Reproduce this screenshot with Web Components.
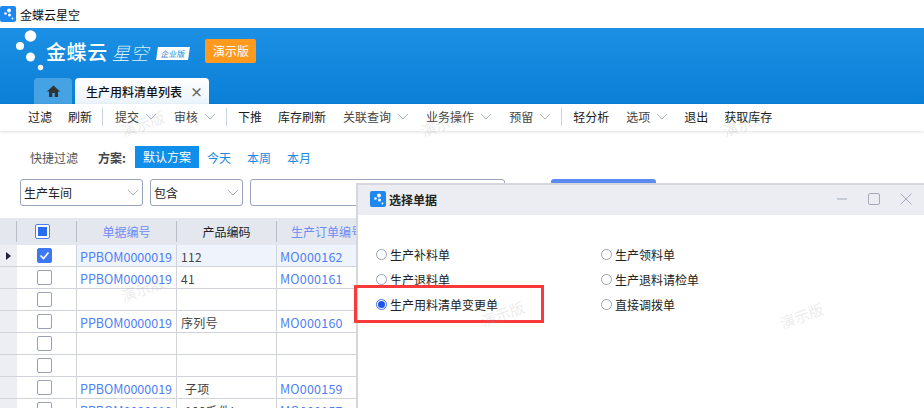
<!DOCTYPE html>
<html><head><meta charset="utf-8">
<style>
html,body{margin:0;padding:0}
body{width:924px;height:408px;overflow:hidden;font:12px "Noto Sans CJK SC","Noto Sans",sans-serif;color:#333;background:#fff}
</style></head><body>
<kd-app></kd-app>
<script>
const logo=(s)=>`<svg width="${s}" height="${s}" viewBox="0 0 16 16" style="display:block;flex:none"><rect width="16" height="16" rx="2" fill="#1e88ee"/><circle cx="9" cy="4.5" r="1.9" fill="#fff"/><circle cx="5.5" cy="7.5" r="1.3" fill="#fff"/><circle cx="9.5" cy="9" r="1.5" fill="#fff"/><circle cx="12.5" cy="12.5" r=".9" fill="#fff"/></svg>`;
const chev=`<svg width="12" height="7" viewBox="0 0 12 7" style="display:block"><path d="M1 1l5 5 5-5" fill="none" stroke="#a9b4c6" stroke-width="1"/></svg>`;
class KdBase extends HTMLElement{
  connectedCallback(){ if(!this.shadowRoot){this.attachShadow({mode:'open'}).innerHTML=this.render();} }
}
class KdTitlebar extends KdBase{render(){return `<style>:host{display:flex;align-items:center;height:28px;gap:4px;color:#111;font-size:12px;background:#fff}</style>${logo(16)}<span><slot></slot></span>`}}
class KdHeader extends KdBase{render(){return `<style>
:host{display:block;height:76px;background:linear-gradient(180deg,#1b90e4,#0a7fd6);position:relative}
.brand{display:flex;align-items:center;height:47px;padding-left:16px}
.dots{flex:none;width:30px;height:44px}
.n{color:#fff;font-size:20px;font-weight:500;letter-spacing:.6px;line-height:1}
.x{margin-left:4px;color:#d5ebfb;font-size:18px;font-weight:300;font-style:italic;letter-spacing:.8px;line-height:1}
.e{margin-left:8px;width:32px;height:13px;background:#fff;color:#1b85d8;font-size:8px;line-height:13px;text-align:center;transform:skewX(-8deg);margin-top:3px}
.demo{margin-left:16px;width:51px;height:24px;margin-top:-2px;background:#ff9a1f;border-radius:2px;color:#fff;text-align:center;line-height:24px;font-size:12px}
.tabs{display:flex;gap:3px;padding-left:34px;height:26px;margin-top:3px}
.home{width:38px;background:#45a2e3;border-radius:4px 4px 0 0;display:flex;align-items:center;justify-content:center}
.tab{width:134px;background:linear-gradient(#fff,#eaf3fb);border-radius:4px 4px 0 0;display:flex;align-items:center;padding-left:11px;box-sizing:border-box;color:#111;font-weight:500}
.c{margin-left:8px;color:#666;font-size:13px;font-weight:700;line-height:1}
</style>
<div class="brand">
<svg class="dots" viewBox="0 0 30 44"><circle cx="14.500" cy="6" r="5.800" fill="#fff"/><circle cx="4" cy="16" r="4" fill="#fff"/><circle cx="14.500" cy="27" r="4.500" fill="#fff"/><circle cx="25" cy="37.500" r="2.700" fill="#fff" transform="translate(-.5 0)"/></svg>
<span class="n">金蝶云</span><span class="x">星空</span><span class="e">企业版</span><span class="demo">演示版</span></div>
<div class="tabs"><div class="home"><svg width="13" height="12" viewBox="0 0 13 12"><path d="M6.500 .5L0 6.500h2V12h3.300V8h2.400v4H11V6.500h2z" fill="#333"/></svg></div>
<div class="tab">生产用料清单列表<span class="c">×</span></div></div>`}}
class KdTool extends KdBase{render(){const a=this.hasAttribute('menu');const m=+(this.getAttribute('gap')||16)-(a?2:0);return `<style>:host{display:flex;align-items:center;gap:6px;margin-right:${m}px;color:${a?'#444':'#1a1a1a'}}</style><slot></slot>${a?chev:''}`}}
class KdSep extends KdBase{render(){return `<style>:host{display:block;width:1px;height:18px;background:#c6d3e6;margin-right:${this.getAttribute('gap')||12}px}</style>`}}
class KdToolbar extends KdBase{render(){return `<style>:host{display:flex;align-items:center;height:27px;box-sizing:border-box;padding:0 0 2px 28px;background:#fff;box-shadow:0 1px 3px rgba(0,0,0,.12);position:relative}</style><slot></slot>`}}
class KdScheme extends KdBase{render(){return `<style>
:host{display:flex;align-items:center;height:22px;margin-top:15px;padding-left:30px}
.t{color:#555;width:68px}.l{font-weight:700;color:#444;width:37px}
.on{width:64px;height:22px;line-height:22px;background:#0f8eea;color:#fff;text-align:center;margin-right:8px}
.o{color:#1b8ae0;margin-right:16px;width:24px}
</style><span class="t">快捷过滤</span><span class="l">方案:</span><span class="on">默认方案</span><span class="o">今天</span><span class="o">本周</span><span class="o">本月</span>`}}
class KdSelect extends KdBase{render(){const w=this.getAttribute('w');return `<style>
:host{display:flex;align-items:center;justify-content:space-between;box-sizing:border-box;width:${w}px;height:27px;border:1px solid #99a3bb;border-radius:3px;padding:0 3px 0 3px;color:#222;margin-right:7px;flex:none}
</style><span><slot></slot></span>${this.hasAttribute('plain')?'':chev}`}}
class KdFilter extends KdBase{render(){return `<style>:host{display:flex;height:27px;margin-top:11px;padding-left:20px}
.b{width:105px;height:27px;background:#5a8bf0;border-radius:3px;margin-left:39px;flex:none}</style>
<kd-select w="123">生产车间</kd-select><kd-select w="93">包含</kd-select><kd-select w="255" plain></kd-select><div class="b"></div>`}}
const cols='17px 60px 100px 100px 1fr';
class KdHead extends KdBase{render(){return `<style>
:host{display:grid;grid-template-columns:${cols};height:27px;background:#e4e7ee;align-items:center}
div{height:21px;line-height:21px;text-align:center;border-right:1px solid #b9bdc6;color:#6c8ef2;box-sizing:content-box;display:flex;align-items:center;justify-content:center;white-space:nowrap;overflow:hidden}
.k{color:#222}.last{border:0}
.b{justify-content:flex-start;padding-left:18px;box-sizing:border-box;height:21px}
i{display:block;box-sizing:border-box;width:15px;height:15px;border:1px solid #4d7ff0;border-radius:2px;background:#fff;padding:2px}
i:before{content:"";display:block;width:9px;height:9px;background:#2a6cf0}
</style><div></div><div class="b"><i></i></div><div>单据编号</div><div class="k">产品编码</div><div class="last" style="justify-content:flex-start;padding-left:14px">生产订单编号</div>`}}
class KdRow extends KdBase{render(){const g=n=>this.getAttribute(n)||'';const s=this.hasAttribute('sel');return `<style>
:host{display:grid;grid-template-columns:${cols};height:22px;box-sizing:border-box;border-bottom:1px solid #d0d3da;background:${s?'#eff3fc':'#fff'}}
div{border-right:1px solid #d0d3da;display:flex;align-items:center;padding:1px 0 0 3px;box-sizing:border-box;white-space:nowrap;overflow:hidden;line-height:21px}
.a{background:#eceef3;border-right:0;padding:0;justify-content:center}
.c{background:#fff;padding:0 0 0 20px;justify-content:flex-start}
.l{color:#4f7ff5;font-size:12.5px}.last{border:0;letter-spacing:.2px}
.t{color:#444;padding-left:${g('ind')||4}px;letter-spacing:.3px}
i{display:block;box-sizing:border-box;width:15px;height:15px;border:1px solid #9aa1b1;border-radius:2px;background:#fff}
i.on{background:#3d78f2;border-color:#3d78f2}
svg{display:block}
</style><div class="a">${s?'<svg width="5" height="8" viewBox="0 0 5 8"><path d="M0 0l5 4-5 4z" fill="#223"/></svg>':''}</div><div class="c"><i class="${s?'on':''}">${s?'<svg width="13" height="13" viewBox="0 0 13 13"><path d="M2.500 6.500l3 3 5-6" fill="none" stroke="#fff" stroke-width="1.600"/></svg>':''}</i></div><div class="l">${g('a')}</div><div class="t">${g('b')}</div><div class="l last">${g('c')}</div>`}}
class KdRadio extends KdBase{render(){const on=this.hasAttribute('on');return `<style>
:host{display:flex;align-items:center;gap:3px;height:24px;color:#222}
i{display:block;box-sizing:border-box;width:11px;height:11px;border:1px solid #9aa3b5;border-radius:50%;background:#fff;flex:none;position:relative}
i.on{border-color:#3d6ff0}
i.on:after{content:"";position:absolute;left:1px;top:1px;width:7px;height:7px;border-radius:50%;background:#1f54e8}
</style><i class="${on?'on':''}"></i><span><slot></slot></span>`}}
class KdDialog extends KdBase{render(){return `<style>
:host{position:absolute;left:356px;top:183px;width:568px;height:225px;box-sizing:border-box;border:solid #d6d7de;border-width:2px 0 0 2px;background:#fff;display:block}
.h{display:flex;align-items:center;height:30px;padding-bottom:2px;box-sizing:border-box;background:#ecedf2;padding-left:12px;gap:3px;font-weight:700;color:#222}
.s{flex:1}.w{display:flex;align-items:center;gap:20px;padding-right:12px}
.g{display:grid;grid-template-columns:225px 1fr;padding:27px 0 0 18px;grid-auto-rows:25px}
svg{display:block}
</style><div class="h">${logo(16)}<span>选择单据</span><span class="s"></span><span class="w">
<svg width="12" height="12" viewBox="0 0 12 12"><path d="M1 6h10" stroke="#a3abbd" fill="none"/></svg>
<svg width="12" height="12" viewBox="0 0 12 12"><rect x=".5" y=".5" width="11" height="11" rx="1.500" stroke="#a3abbd" fill="none"/></svg>
<svg width="12" height="12" viewBox="0 0 12 12"><path d="M.5 .5l11 11M11.500 .5l-11 11" stroke="#a3abbd" fill="none"/></svg></span></div>
<div class="g"><kd-radio>生产补料单</kd-radio><kd-radio>生产领料单</kd-radio><kd-radio>生产退料单</kd-radio><kd-radio>生产退料请检单</kd-radio><kd-radio on>生产用料清单变更单</kd-radio><kd-radio>直接调拨单</kd-radio></div>`}}
class KdMark extends KdBase{render(){return `<style>:host{position:absolute;left:${this.getAttribute('x')}px;top:${this.getAttribute('y')}px;color:rgba(150,150,150,.2);font-size:15px;transform:rotate(-20deg);pointer-events:none;white-space:nowrap}</style>演示版`}}
class KdHighlight extends KdBase{render(){return `<style>:host{position:absolute;left:354px;top:285px;width:190px;height:38px;box-sizing:border-box;border:3px solid #f93a3a;pointer-events:none}</style>`}}
class KdApp extends KdBase{render(){return `<style>:host{display:block;position:relative;width:924px;height:408px;overflow:hidden}
.grid{margin-top:12px}</style>
<kd-titlebar>金蝶云星空</kd-titlebar><kd-header></kd-header>
<kd-toolbar><kd-tool>过滤</kd-tool><kd-tool gap="10">刷新</kd-tool><kd-sep></kd-sep><kd-tool menu gap="19">提交</kd-tool><kd-tool menu gap="12">审核</kd-tool><kd-sep gap="11"></kd-sep><kd-tool>下推</kd-tool><kd-tool gap="17">库存刷新</kd-tool><kd-tool menu gap="19">关联查询</kd-tool><kd-tool menu gap="19">业务操作</kd-tool><kd-tool menu gap="12">预留</kd-tool><kd-sep gap="11"></kd-sep><kd-tool gap="17">轻分析</kd-tool><kd-tool menu gap="18">选项</kd-tool><kd-tool>退出</kd-tool><kd-tool>获取库存</kd-tool></kd-toolbar>
<kd-scheme></kd-scheme><kd-filter></kd-filter>
<div class="grid"><kd-head></kd-head>
<kd-row sel a="PPBOM0000019" b="112" c="MO000162"></kd-row>
<kd-row a="PPBOM0000019" b="41" c="MO000161"></kd-row>
<kd-row></kd-row>
<kd-row a="PPBOM0000019" b="序列号" c="MO000160"></kd-row>
<kd-row></kd-row><kd-row></kd-row>
<kd-row a="PPBOM0000019" b="子项" ind="8" c="MO000159"></kd-row>
<kd-row a="PPBOM0000019" b="100毛件L" ind="8" c="MO000157"></kd-row></div>
<kd-mark x="120" y="113"></kd-mark><kd-mark x="420" y="113"></kd-mark><kd-mark x="722" y="113"></kd-mark><kd-mark x="120" y="278"></kd-mark>
<kd-dialog></kd-dialog><kd-highlight></kd-highlight>
<kd-mark x="480" y="303"></kd-mark><kd-mark x="779" y="305"></kd-mark>`}}
for(const [n,c] of Object.entries({'kd-titlebar':KdTitlebar,'kd-header':KdHeader,'kd-tool':KdTool,'kd-sep':KdSep,'kd-toolbar':KdToolbar,'kd-scheme':KdScheme,'kd-select':KdSelect,'kd-filter':KdFilter,'kd-head':KdHead,'kd-row':KdRow,'kd-radio':KdRadio,'kd-dialog':KdDialog,'kd-mark':KdMark,'kd-highlight':KdHighlight,'kd-app':KdApp})) customElements.define(n,c);
</script>
</body></html>
